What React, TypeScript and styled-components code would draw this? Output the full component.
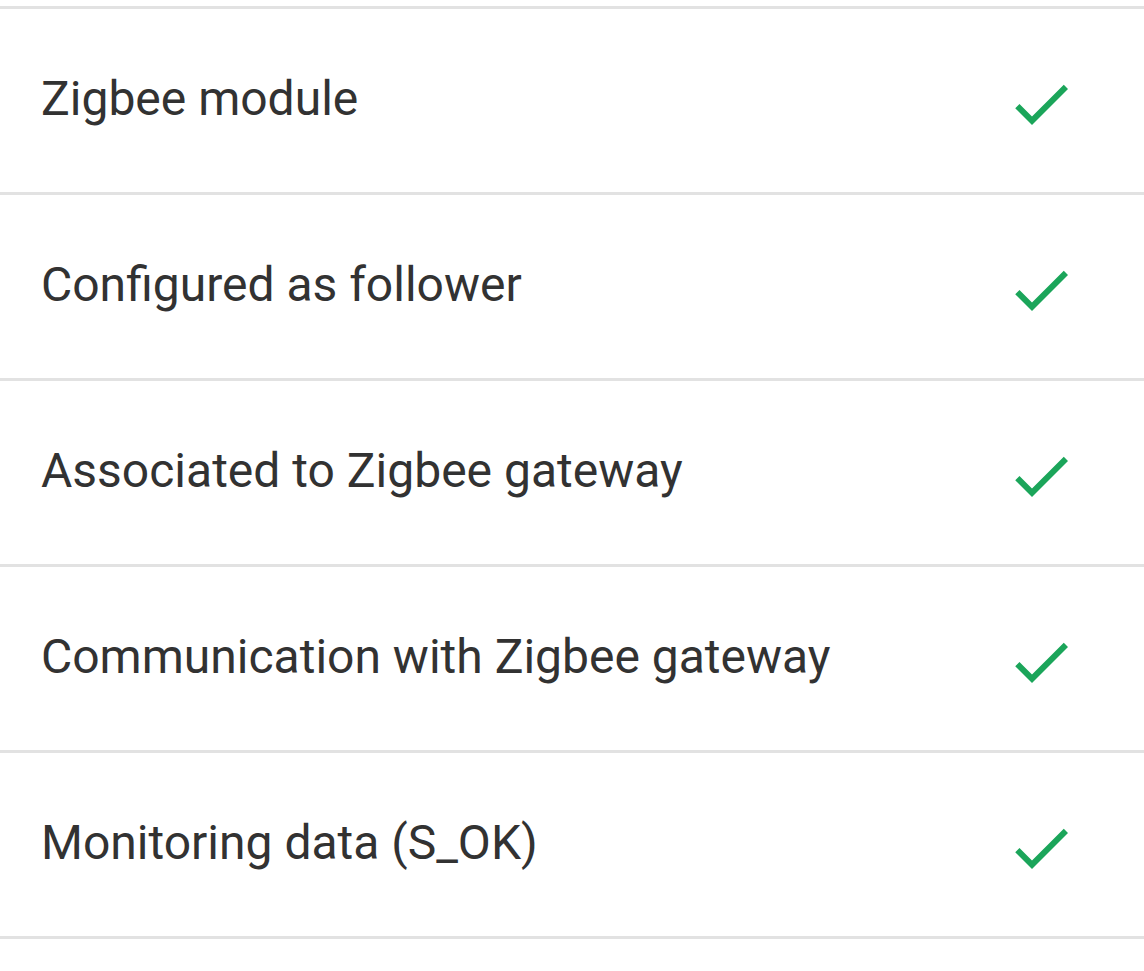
import React from "react";
import styled, { createGlobalStyle } from "styled-components";

const Global = createGlobalStyle`
  html, body { margin: 0; padding: 0; background: #ffffff; }
  body { font-family: Roboto, "Noto Sans", sans-serif; }
`;

const List = styled.ul`
  list-style: none;
  margin: 0;
  padding: 6px 0 0 0;
  width: 1144px;
`;

const Row = styled.li<{ $first?: boolean }>`
  display: flex;
  align-items: center;
  justify-content: space-between;
  height: 183px;
  padding: 0 67px 0 41px;
  border-top: ${(p) => (p.$first ? "3px solid #e2e2e2" : "none")};
  border-bottom: 3px solid #e2e2e2;
`;

const Label = styled.span`
  font-family: Roboto, "Noto Sans", sans-serif;
  font-size: 48px;
  color: #323232;
  margin-top: -4px;
`;

const Check = styled.svg`
  width: 72px;
  height: 72px;
  margin-right: 0;
  margin-top: 6px;
  fill: #1ba55a;
`;

const items = [
  "Zigbee module",
  "Configured as follower",
  "Associated to Zigbee gateway",
  "Communication with Zigbee gateway",
  "Monitoring data (S_OK)",
];

export default function App() {
  return (
    <>
      <Global />
      <List>
        {items.map((t, i) => (
          <Row key={t} $first={i === 0}>
            <Label>{t}</Label>
            <Check viewBox="0 0 24 24">
              <path d="M9 16.17L4.83 12l-1.42 1.41L9 19 21 7l-1.41-1.41z" />
            </Check>
          </Row>
        ))}
      </List>
    </>
  );
}
